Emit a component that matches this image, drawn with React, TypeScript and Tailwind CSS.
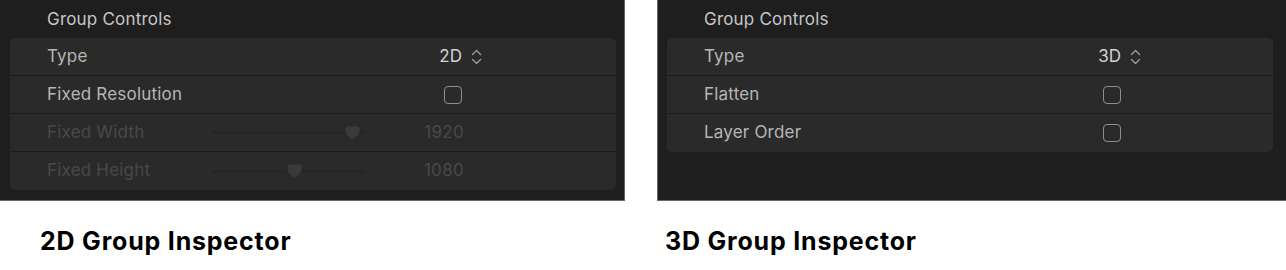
import React from "react";

const font = { fontFamily: "Inter, 'Noto Sans', 'Liberation Sans', sans-serif" };

function Chevrons() {
  return (
    <svg width="11" height="16" viewBox="0 0 11 16" fill="none" className="ml-[9px]">
      <path d="M1.5 5.5 L5.5 1.5 L9.5 5.5" stroke="#9a9a9a" strokeWidth="1.4" strokeLinecap="round" strokeLinejoin="round" />
      <path d="M1.5 10.5 L5.5 14.5 L9.5 10.5" stroke="#9a9a9a" strokeWidth="1.4" strokeLinecap="round" strokeLinejoin="round" />
    </svg>
  );
}

function Checkbox() {
  return <div className="w-[18px] h-[18px] rounded-[4px] border-[1.5px] border-[#8e8e8e]" />;
}

function Slider({ pos }: { pos: number }) {
  return (
    <div className="relative w-[153px] h-[14px] flex items-center">
      <div className="w-full h-[3px] rounded-full bg-[#262626]" />
      <svg
        width="15"
        height="14"
        viewBox="0 0 15 14"
        className="absolute top-0"
        style={{ left: pos }}
      >
        <path d="M3 0.5 H12 A2.5 2.5 0 0 1 14.5 3 V6 Q14.5 8.5 7.5 13.5 Q0.5 8.5 0.5 6 V3 A2.5 2.5 0 0 1 3 0.5 Z" fill="#3a3a3a" />
      </svg>
    </div>
  );
}

function Row({
  label,
  dim,
  children,
  last,
}: {
  label: string;
  dim?: boolean;
  children?: React.ReactNode;
  last?: boolean;
}) {
  return (
    <div
      className={`h-[38px] flex items-center ${last ? "" : "border-b border-[#1c1c1c]"}`}
    >
      <div
        className={`w-[165px] pl-[37px] text-[17px] tracking-[0.2px] whitespace-nowrap ${dim ? "text-[#484848]" : "text-[#b6b6b6]"}`}
      >
        {label}
      </div>
      {children}
    </div>
  );
}

export default function App() {
  return (
    <div className="w-[1286px] h-[270px] bg-white flex" style={font}>
      {/* Left column */}
      <div className="w-[625px] flex flex-col">
        <div className="h-[201px] bg-[#1e1e1e] border-r border-b border-[#666666] pl-[10px] pr-[8px]">
          <div className="h-[38px] flex items-center pt-[2px] pl-[37px] text-[17px] tracking-[0.2px] text-[#c6c6c6]">Group Controls</div>
          <div className="bg-[#2a2a2a] rounded-[5px] overflow-hidden">
            <Row label="Type">
              <div className="w-[307px] flex justify-end items-center">
                <span className="text-[17px] text-[#d2d2d2]">2D</span>
                <Chevrons />
              </div>
            </Row>
            <Row label="Fixed Resolution">
              <div className="w-[287px] flex justify-end">
                <Checkbox />
              </div>
            </Row>
            <Row label="Fixed Width" dim>
              <div className="ml-[37px] flex items-center">
                <Slider pos={133} />
                <div className="w-[99px] text-right text-[17px] tracking-[0.3px] text-[#484848]">1920</div>
              </div>
            </Row>
            <Row label="Fixed Height" dim last>
              <div className="ml-[37px] flex items-center">
                <Slider pos={75} />
                <div className="w-[99px] text-right text-[17px] tracking-[0.3px] text-[#484848]">1080</div>
              </div>
            </Row>
          </div>
        </div>
        <div className="pl-[40px] pt-[25px] text-[25px] leading-[30px] tracking-[0.8px] font-bold text-black">2D Group Inspector</div>
      </div>

      <div className="w-[32px]" />

      {/* Right column */}
      <div className="flex-1 flex flex-col">
        <div className="h-[201px] bg-[#1e1e1e] border-l border-b border-[#666666] pl-[9px] pr-[13px]">
          <div className="h-[38px] flex items-center pt-[2px] pl-[37px] text-[17px] tracking-[0.2px] text-[#c6c6c6]">Group Controls</div>
          <div className="bg-[#2a2a2a] rounded-[5px] overflow-hidden">
            <Row label="Type">
              <div className="w-[309px] flex justify-end items-center">
                <span className="text-[17px] text-[#d2d2d2]">3D</span>
                <Chevrons />
              </div>
            </Row>
            <Row label="Flatten">
              <div className="w-[289px] flex justify-end">
                <Checkbox />
              </div>
            </Row>
            <Row label="Layer Order" last>
              <div className="w-[289px] flex justify-end">
                <Checkbox />
              </div>
            </Row>
          </div>
        </div>
        <div className="pl-[8px] pt-[25px] text-[25px] leading-[30px] tracking-[0.8px] font-bold text-black">3D Group Inspector</div>
      </div>
    </div>
  );
}
